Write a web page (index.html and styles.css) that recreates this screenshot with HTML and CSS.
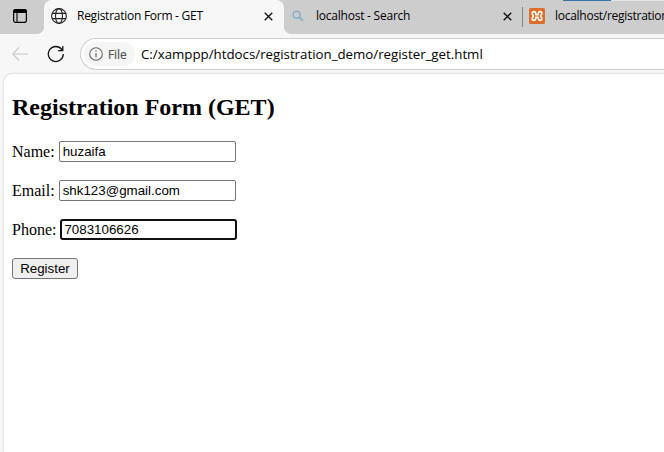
FILE: index.html
```html
<!DOCTYPE html>
<html lang="en">
<head>
<meta charset="utf-8">
<title>Registration Form - GET</title>
<link rel="stylesheet" href="styles.css">
</head>
<body>
<div class="tabstrip">
  <div class="corner">
    <svg width="16" height="16" viewBox="0 0 16 16"><rect x="1.600" y="1.600" width="12.800" height="12.800" rx="2.200" fill="none" stroke="#000" stroke-width="1.200"/><path d="M1 5V3.500A2.500 2.500 0 0 1 3.500 1h9A2.500 2.500 0 0 1 15 3.500V5Z" fill="#000"/><path d="M5 5v9.500" stroke="#000" stroke-width="1.100"/></svg>
  </div>
  <div class="tab active">
    <svg class="globe" width="16" height="16" viewBox="0 0 16 16" fill="none" stroke="#222" stroke-width="1.100"><circle cx="8" cy="8" r="7.400"/><ellipse cx="8" cy="8" rx="3.500" ry="7.400"/><path d="M1.200 5.400h13.600M1.200 10.600h13.600"/></svg>
    <span class="title t1">Registration Form - GET</span>
    <svg class="close" width="9" height="9" viewBox="0 0 9 9"><path d="M.7.7l7.600 7.600M8.300.7L.7 8.300" stroke="#111" stroke-width="1.300"/></svg>
  </div>
  <div class="tab search">
    <svg class="lens" width="12" height="12" viewBox="0 0 12 12" fill="none" stroke="#86adc9"><circle cx="4.700" cy="4.700" r="3.500" stroke-width="1.500"/><path d="M7.200 7.200l3.600 3.600" stroke-width="1.900"/></svg>
    <span class="title t2">localhost - Search</span>
    <svg class="close" width="9" height="9" viewBox="0 0 9 9"><path d="M.7.7l7.600 7.600M8.300.7L.7 8.300" stroke="#111" stroke-width="1.300"/></svg>
  </div>
  <div class="tab last">
    <svg class="xampp" width="16" height="16" viewBox="0 0 16 16"><rect width="16" height="16" rx="1.500" fill="#dc6f2b"/><path d="M6.700 6.600V5.200Q6.700 3.600 5 3.600Q3.200 3.600 3.200 5.400Q3.200 6.700 4.200 7.300V8.700Q3.200 9.300 3.200 10.600Q3.200 12.400 5 12.400Q6.700 12.400 6.700 10.800V9.400H9.300V10.800Q9.300 12.400 11 12.400Q12.800 12.400 12.800 10.600Q12.800 9.300 11.800 8.700V7.300Q12.800 6.700 12.800 5.400Q12.800 3.600 11 3.600Q9.300 3.600 9.300 5.200V6.600Z" fill="none" stroke="#fff8f0" stroke-width="1.600" stroke-linejoin="round"/></svg>
    <span class="title t3">localhost/registration</span>
  </div>
  <div class="edge"></div>
</div>
<div class="toolbar">
  <svg class="back" width="16" height="14" viewBox="0 0 16 14" fill="none" stroke="#c8c8c8" stroke-width="1.100"><path d="M7 .5L.8 7 7 13.500M.8 7H16"/></svg>
  <svg class="reload" width="18" height="18" viewBox="0 0 18 18" fill="none" stroke="#161616" stroke-width="1.300"><path d="M16.300 9A7.500 7.500 0 1 1 14.800 4.500L15.600 5.600M15.800 1V5.700H11.100"/></svg>
  <div class="address">
    <div class="chip">
      <svg width="14" height="14" viewBox="0 0 14 14"><circle cx="7" cy="7" r="6.300" fill="none" stroke="#666" stroke-width="1.100"/><path d="M7 6v4.300" stroke="#666" stroke-width="1.200"/><circle cx="7" cy="4" r=".8" fill="#666"/></svg>
      <span>File</span>
    </div>
    <span class="url">C:/xamppp/htdocs/registration_demo/register_get.html</span>
  </div>
</div>
<main class="page">
  <h2>Registration Form (GET)</h2>
  <form>
    <div class="row"><label for="n">Name:</label><input id="n" type="text" value="huzaifa"></div>
    <div class="row"><label for="e">Email:</label><input id="e" type="text" value="shk123@gmail.com"></div>
    <div class="row"><label for="p">Phone:</label><input id="p" class="focused" type="text" value="7083106626"></div>
    <button type="button">Register</button>
  </form>
</main>
</body>
</html>
```

FILE: styles.css
```css
* { box-sizing: border-box; }
body {
  margin: 0;
  width: 664px;
  height: 452px;
  overflow: hidden;
  background: #f7f7f7;
  display: flex;
  flex-direction: column;
  font-family: "Open Sans", "Noto Sans", sans-serif;
  color: #000;
}
svg { display: block; flex: none; }
.tabstrip {
  position: relative;
  height: 34px;
  flex: none;
  display: flex;
  overflow: hidden;
  background: #f7f7f7;
}
.corner {
  width: 44px;
  flex: none;
  padding: 8px 0 0 12px;
  background: #cdcdcd;
  border-bottom-right-radius: 7px;
}
.tab {
  flex: none;
  display: flex;
  align-items: center;
  background: #cdcdcd;
  height: 34px;
  padding-bottom: 2px;
}
.tab.active {
  width: 240px;
  background: #f7f7f7;
  border-radius: 8px 8px 0 0;
  padding-left: 7px;
  box-shadow: 0 -10px 0 5px #cdcdcd;
}
.tab.search {
  width: 238px;
  padding-left: 8px;
  border-bottom-left-radius: 7px;
}
.tab.last {
  width: 142px;
  padding-left: 0;
}
.tab.last::before {
  content: "";
  flex: none;
  width: 1px;
  height: 20px;
  margin: 2px 6px 0 0;
  background: #858585;
}
.title { font-size: 12px; line-height: 16px; white-space: nowrap; }
.t1 { margin-left: 10px; width: 187px; letter-spacing: -.26px; }
.t2 { margin-left: 12px; width: 187px; letter-spacing: -.23px; }
.t3 { margin-left: 10px; letter-spacing: -.27px; }
.close { margin-top: 1px; }
.edge {
  position: absolute;
  top: 0;
  left: 563px;
  width: 101px;
  height: 1px;
  background: linear-gradient(90deg, #3973a8 48px, #e0e6e9 48px);
}
.toolbar {
  height: 40px;
  flex: none;
  display: flex;
  align-items: center;
  padding-left: 12px;
}
.reload { margin-left: 19px; }
.address {
  width: 584px;
  height: 32px;
  margin-left: 15px;
  flex: none;
  display: flex;
  align-items: center;
  border: 1px solid #cecece;
  border-right: 0;
  border-radius: 16px 0 0 16px;
  background: #fff;
  padding-left: 3px;
}
.chip {
  width: 51px;
  height: 24px;
  display: flex;
  align-items: center;
  padding-left: 5px;
  border-radius: 12px;
  background: #f5f5f5;
  font-size: 12px;
  color: #555;
}
.chip span { margin-left: 5px; letter-spacing: -.1px; -webkit-text-stroke: .2px #555; }
.url { margin-left: 6px; font-size: 13.3px; letter-spacing: -.01px; white-space: nowrap; }
.page {
  flex: 1;
  margin-left: 4px;
  padding: 20px 8px 0;
  background: #fff;
  border-top-left-radius: 8px;
  box-shadow: 0 0 2px rgba(0, 0, 0, .28);
  font: 16px "Liberation Serif", serif;
  color: #000;
}
h2 { margin: 0 0 20px; font-size: 24px; line-height: 27px; }
form { display: flex; flex-direction: column; gap: 18px; align-items: flex-start; }
.row { display: flex; height: 21px; align-items: center; gap: 4px; }
.row label { line-height: 18px; }
input {
  width: 177px;
  height: 21px;
  padding: 1px 3px;
  border: 1px solid #767676;
  border-radius: 2px;
  outline: none;
  font: 13.333px "Liberation Sans", sans-serif;
  color: #000;
  background: #fff;
}
input.focused { border: 2px solid #101010; border-radius: 3px; padding: 0 2px; }
button {
  width: 66px;
  height: 21px;
  padding: 0;
  border: 1px solid #767676;
  border-radius: 3px;
  background: #efefef;
  font: 13.333px "Liberation Sans", sans-serif;
  color: #000;
}
```
